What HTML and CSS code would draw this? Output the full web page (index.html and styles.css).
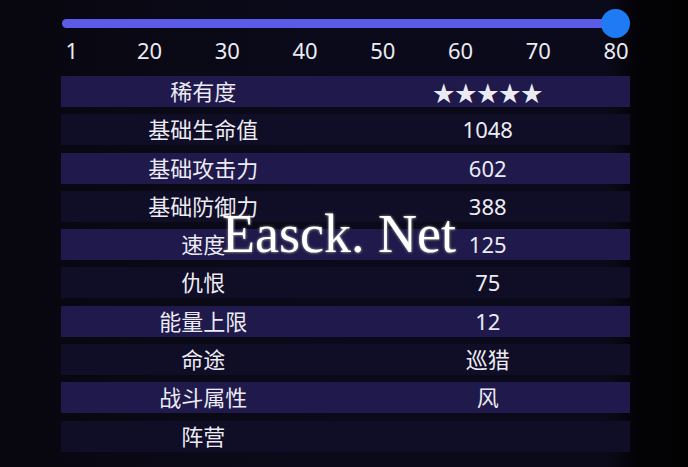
FILE: index.html
```html
<!DOCTYPE html>
<html lang="zh">
<head>
<meta charset="utf-8">
<title>角色属性</title>
<link rel="stylesheet" href="styles.css">
</head>
<body>
<div class="page">
  <div class="slider">
    <div class="track"></div>
    <div class="thumb"></div>
  </div>
  <div class="ticks">
    <span>1</span><span>20</span><span>30</span><span>40</span><span>50</span><span>60</span><span>70</span><span>80</span>
  </div>
  <div class="table">
    <div class="row odd"><span>稀有度</span><span class="stars">★★★★★</span></div>
    <div class="row even"><span>基础生命值</span><span>1048</span></div>
    <div class="row odd"><span>基础攻击力</span><span>602</span></div>
    <div class="row even"><span>基础防御力</span><span>388</span></div>
    <div class="row odd"><span>速度</span><span>125</span></div>
    <div class="row even"><span>仇恨</span><span>75</span></div>
    <div class="row odd"><span>能量上限</span><span>12</span></div>
    <div class="row even"><span>命途</span><span>巡猎</span></div>
    <div class="row odd"><span>战斗属性</span><span>风</span></div>
    <div class="row even"><span>阵营</span><span></span></div>
  </div>
  <div class="watermark">Easck. Net</div>
</div>
</body>
</html>
```
FILE: styles.css
```css
html, body {
  margin: 0;
  padding: 0;
}
body {
  width: 688px;
  height: 467px;
  overflow: hidden;
  background: linear-gradient(to right, #08070f 0%, #0b0a1b 50%, #0b0a1a 88%, #030205 93%, #020203 100%);
  font-family: "Noto Sans", "Noto Sans CJK SC", sans-serif;
  color: #ecebf3;
}
.page {
  position: relative;
  height: 467px;
  padding-top: 19px;
  box-sizing: border-box;
}
.slider {
  position: relative;
  margin-left: 62px;
  width: 553px;
  height: 9px;
}
.track {
  height: 9px;
  border-radius: 5px;
  background: #5b5be8;
}
.thumb {
  position: absolute;
  right: -14.5px;
  top: -10px;
  width: 29px;
  height: 29px;
  border-radius: 50%;
  background: #1e7bf4;
}
.ticks {
  display: grid;
  grid-template-columns: repeat(8, 1fr);
  width: 622px;
  margin-left: 33px;
  margin-top: 9px;
  font-size: 22px;
  line-height: 26px;
  text-align: center;
}
.table {
  margin-left: 61px;
  margin-top: 13px;
  width: 569px;
  display: flex;
  flex-direction: column;
  gap: 7.3px;
}
.row {
  display: grid;
  grid-template-columns: 1fr 1fr;
  height: 31px;
  line-height: 31px;
  font-size: 22px;
  text-align: center;
}
.row.odd {
  background: #1f1a4b;
}
.row.even {
  background: #100d26;
}
.stars {
  font-family: "Noto Sans CJK SC", sans-serif;
  font-size: 22px;
}
.watermark {
  position: absolute;
  left: 222px;
  top: 207px;
  font-family: "Liberation Serif", serif;
  font-size: 54px;
  line-height: 54px;
  letter-spacing: 0px;
  color: #ffffff;
  text-shadow: 0 0 3px rgba(255, 255, 255, 0.6), 1px 1px 2px rgba(60, 60, 60, 0.9);
  white-space: pre;
}
```
